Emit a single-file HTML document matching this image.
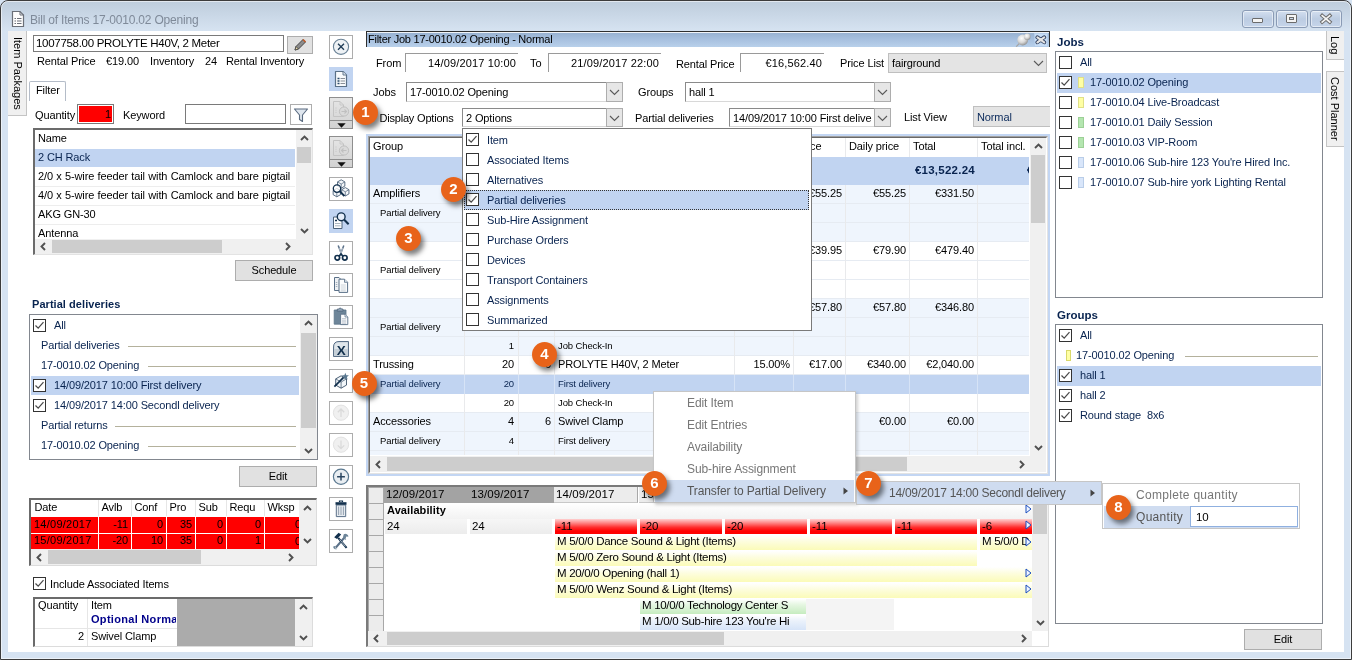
<!DOCTYPE html>
<html><head><meta charset="utf-8"><title>Bill of Items 17-0010.02 Opening</title>
<style>
*{box-sizing:border-box}
html,body{margin:0;padding:0}
body{width:1352px;height:660px;overflow:hidden;position:relative;background:#d6e3f2;font:11px "Liberation Sans",sans-serif;color:#000;letter-spacing:-0.12px}
.a{position:absolute}
.t{position:absolute;white-space:nowrap;line-height:14px}
.vt{writing-mode:vertical-rl;text-align:center;line-height:19px;font-size:11px;letter-spacing:0;white-space:nowrap}
.nv{color:#08234f}
.b{font-weight:bold}
.circ{width:25px;height:25px;border-radius:50%;background:#e8631a;color:#fff;font:bold 15px/23px "Liberation Sans",sans-serif;text-align:center;box-shadow:3px 4px 5px rgba(0,0,0,.5);letter-spacing:0}
.sm{font-size:9.5px}
.mn{font-size:12px;color:#777;letter-spacing:-0.1px}
</style></head>
<body>
<div class="a" style="left:0;top:0;width:1352px;height:660px;will-change:transform">
<div class="a" style="left:0;top:0;width:1352px;height:660px;border:1px solid #3c3c3c;border-radius:8px 8px 0 0;background:linear-gradient(#becddc 0,#c9d7e6 14px,#d7e4f2 31px,#d6e3f2 32px)"></div>
<div class="a" style="left:1px;top:1px;width:1350px;height:658px;border:1px solid rgba(255,255,255,.55);border-radius:7px 7px 0 0"></div>
<div class="a " style="left:8px;top:31px;width:1336px;height:621px;background:#fff"></div>
<svg class="a" style="left:11px;top:10px" width="14" height="18" viewBox="0 0 14 18"><path d="M1.5,1.5 H9 L12.5,5 V16.5 H1.5 Z" fill="#fdfdfd" stroke="#6a6f78" stroke-width="1.2"/><path d="M9,1.5 V5 H12.5" fill="none" stroke="#6a6f78" stroke-width="1"/><path d="M3.5,8.5h1.5M6,8.5h4.5M3.5,11h1.5M6,11h4.5M3.5,13.5h1.5M6,13.5h4.5" stroke="#6a6f78" stroke-width="1.1"/></svg>
<div class="t" style="left:30px;top:12px;font-size:12px;line-height:16px;color:#7f8a99;letter-spacing:-0.2px">Bill of Items 17-0010.02 Opening</div>
<div class="a " style="left:1242px;top:10px;width:32px;height:18px;border:1px solid #8a9bb5;border-radius:3px;background:linear-gradient(#d3dfef,#bccce2 50%,#c6d5ea);box-shadow:inset 0 0 0 1px rgba(255,255,255,.5)"></div>
<div class="a " style="left:1276px;top:10px;width:32px;height:18px;border:1px solid #8a9bb5;border-radius:3px;background:linear-gradient(#d3dfef,#bccce2 50%,#c6d5ea);box-shadow:inset 0 0 0 1px rgba(255,255,255,.5)"></div>
<div class="a " style="left:1310px;top:10px;width:32px;height:18px;border:1px solid #8a9bb5;border-radius:3px;background:linear-gradient(#d3dfef,#bccce2 50%,#c6d5ea);box-shadow:inset 0 0 0 1px rgba(255,255,255,.5)"></div>
<div class="a " style="left:1252px;top:18px;width:11px;height:5px;border:1px solid #6b6b6b;border-radius:1px;background:#f4f4f4"></div>
<div class="a " style="left:1286px;top:14px;width:11px;height:9px;border:1px solid #6b6b6b;border-radius:1px;background:#f4f4f4"></div>
<div class="a " style="left:1289px;top:17px;width:5px;height:3px;border:1px solid #6b6b6b;background:#cbd8ea"></div>
<svg class="a" style="left:1319px;top:13px" width="14" height="12" viewBox="0 0 14 12"><path d="M3.2,2.6 L10.8,9 M10.8,2.6 L3.2,9" stroke="#6b6b6b" stroke-width="3.6" stroke-linecap="square"/><path d="M3.2,2.6 L10.8,9 M10.8,2.6 L3.2,9" stroke="#f4f4f4" stroke-width="1.7" stroke-linecap="square"/></svg>
<div class="a " style="left:8px;top:31px;width:19px;height:85px;background:#f0f0f0;border:1px solid #c4c4c4;border-left:none;border-top:none"></div>
<div class="a vt" style="left:8px;top:31px;width:19px;height:85px">Item Packages</div>
<div class="a " style="left:1326px;top:31px;width:18px;height:29px;background:#f0f0f0;border:1px solid #c4c4c4;border-right:none;border-top:none"></div>
<div class="a vt" style="left:1326px;top:31px;width:18px;height:29px">Log</div>
<div class="a " style="left:1326px;top:71px;width:18px;height:76px;background:#f0f0f0;border:1px solid #c4c4c4;border-right:none"></div>
<div class="a vt" style="left:1326px;top:71px;width:18px;height:76px">Cost Planner</div>
<div class="a " style="left:33px;top:35px;width:251px;height:17px;background:#fff;border:1px solid #7a7a7a"></div>
<div class="t " style="left:36px;top:36.0px;font-size:11.5px;letter-spacing:-0.3px">1007758.00 PROLYTE H40V, 2 Meter</div>
<div class="a " style="left:287px;top:36px;width:26px;height:18px;background:#e1e1e1;border:1px solid #adadad"></div>
<svg class="a" style="left:292px;top:37px" width="16" height="16" viewBox="0 0 16 16"><path d="M3,13 L4,9.5 L11,2.5 L13.5,5 L6.5,12 Z" fill="#8c8c8c" stroke="#444" stroke-width="1"/><path d="M3,13 L4,9.5 L6.5,12 Z" fill="#e8d9a8" stroke="#444" stroke-width=".8"/><path d="M11,2.5 L13.5,5" stroke="#c45c2a" stroke-width="1.6"/></svg>
<div class="t " style="left:37px;top:53.5px;">Rental Price</div>
<div class="t " style="left:106px;top:53.5px;">€19.00</div>
<div class="t " style="left:150px;top:53.5px;">Inventory</div>
<div class="t " style="left:205px;top:53.5px;">24</div>
<div class="t " style="left:226px;top:53.5px;">Rental Inventory</div>
<div class="a " style="left:29px;top:81px;width:37px;height:20px;background:#fff;border:1px solid #b4bcc8;border-bottom:none;border-radius:2px 2px 0 0"></div>
<div class="t " style="left:36px;top:82.5px;">Filter</div>
<div class="t " style="left:35px;top:107.5px;">Quantity</div>
<div class="a " style="left:77px;top:104px;width:37px;height:20px;background:#fff;border:1px solid #7a7a7a"></div>
<div class="a " style="left:79px;top:106px;width:33px;height:16px;background:#ff0000"></div>
<div class="t " style="right:1241px;top:106.5px;">1</div>
<div class="t " style="left:123px;top:107.5px;">Keyword</div>
<div class="a " style="left:185px;top:104px;width:101px;height:20px;background:#fff;border:1px solid #7a7a7a"></div>
<div class="a " style="left:290px;top:104px;width:22px;height:21px;background:#fff;border:1px solid #adadad"></div>
<svg class="a" style="left:293px;top:107px" width="16" height="16" viewBox="0 0 16 16"><path d="M1.5,2 H14.5 L9.5,8 V14.5 L6.5,12.5 V8 Z" fill="#dfe6ee" stroke="#5a6b80" stroke-width="1.1" stroke-linejoin="round"/></svg>
<div class="a " style="left:33px;top:128px;width:280px;height:127px;background:#fff;border:1px solid #e3e3e3;border-top:2px solid #6b6b6b;border-left:2px solid #6b6b6b"></div>
<div class="t " style="left:38px;top:131.0px;">Name</div>
<div class="a " style="left:35px;top:149px;width:260px;height:18px;background:#c1d4f1"></div>
<div class="t nv" style="left:38px;top:150.0px;">2 CH Rack</div>
<div class="a " style="left:35px;top:186px;width:260px;height:1px;background:#ededed"></div>
<div class="t " style="left:38px;top:169.0px;word-spacing:0.4px">2/0 x 5-wire feeder tail with Camlock and bare pigtail</div>
<div class="a " style="left:35px;top:205px;width:260px;height:1px;background:#ededed"></div>
<div class="t " style="left:38px;top:188.0px;word-spacing:0.4px">4/0 x 5-wire feeder tail with Camlock and bare pigtail</div>
<div class="a " style="left:35px;top:224px;width:260px;height:1px;background:#ededed"></div>
<div class="t " style="left:38px;top:207.0px;">AKG GN-30</div>
<div class="t " style="left:38px;top:226.0px;">Antenna</div>
<div class="a " style="left:296px;top:130px;width:16px;height:109px;background:#f0f0f0"></div>
<div class="a " style="left:297px;top:147px;width:14px;height:16px;background:#cdcdcd"></div>
<svg class="a" style="left:299.5px;top:134.0px" width="9" height="9" viewBox="0 0 9 9"><polyline points="1,6 4.5,2.5 8,6" fill="none" stroke="#505050" stroke-width="1.9"/></svg>
<svg class="a" style="left:299.5px;top:226.0px" width="9" height="9" viewBox="0 0 9 9"><polyline points="1,3 4.5,6.5 8,3" fill="none" stroke="#505050" stroke-width="1.9"/></svg>
<div class="a " style="left:35px;top:239px;width:261px;height:15px;background:#f0f0f0"></div>
<div class="a " style="left:52px;top:240px;width:170px;height:13px;background:#cdcdcd"></div>
<svg class="a" style="left:39.0px;top:242.0px" width="9" height="9" viewBox="0 0 9 9"><polyline points="6,1 2.5,4.5 6,8" fill="none" stroke="#505050" stroke-width="1.9"/></svg>
<svg class="a" style="left:283.0px;top:242.0px" width="9" height="9" viewBox="0 0 9 9"><polyline points="3,1 6.5,4.5 3,8" fill="none" stroke="#505050" stroke-width="1.9"/></svg>
<div class="a " style="left:296px;top:239px;width:16px;height:15px;background:#f0f0f0"></div>
<div class="a " style="left:235px;top:260px;width:78px;height:21px;background:#e1e1e1;border:1px solid #adadad;text-align:center;line-height:19px">Schedule</div>
<div class="t nv" style="left:32px;top:296.5px;font-weight:bold;font-size:11px;letter-spacing:0.05px">Partial deliveries</div>
<div class="a " style="left:29px;top:314px;width:289px;height:146px;background:#fff;border:1px solid #82878f"></div>
<div class="a " style="left:33px;top:319.0px;width:13px;height:13px;border:1px solid #333;background:#fff"><svg width="11" height="11" viewBox="0 0 11 11" style="display:block"><polyline points="1.5,5.5 4.2,8.2 9.5,2.2" fill="none" stroke="#4a4a4a" stroke-width="1.25"/></svg></div>
<div class="t nv" style="left:54px;top:318.0px;">All</div>
<div class="t nv" style="left:41px;top:338.0px;">Partial deliveries</div>
<div class="a " style="left:128px;top:345.5px;width:168px;height:1px;background:#b4b19c"></div>
<div class="t nv" style="left:41px;top:358.0px;">17-0010.02 Opening</div>
<div class="a " style="left:148px;top:365.5px;width:148px;height:1px;background:#b4b19c"></div>
<div class="a " style="left:31px;top:376.0px;width:268px;height:19px;background:#c1d4f1"></div>
<div class="a " style="left:33px;top:379.0px;width:13px;height:13px;border:1px solid #333;background:#fff"><svg width="11" height="11" viewBox="0 0 11 11" style="display:block"><polyline points="1.5,5.5 4.2,8.2 9.5,2.2" fill="none" stroke="#4a4a4a" stroke-width="1.25"/></svg></div>
<div class="t nv" style="left:54px;top:378.0px;">14/09/2017 10:00 First delivery</div>
<div class="a " style="left:33px;top:399.0px;width:13px;height:13px;border:1px solid #333;background:#fff"><svg width="11" height="11" viewBox="0 0 11 11" style="display:block"><polyline points="1.5,5.5 4.2,8.2 9.5,2.2" fill="none" stroke="#4a4a4a" stroke-width="1.25"/></svg></div>
<div class="t nv" style="left:54px;top:398.0px;">14/09/2017 14:00 Secondl delivery</div>
<div class="t nv" style="left:41px;top:418.0px;">Partial returns</div>
<div class="a " style="left:115px;top:425.5px;width:181px;height:1px;background:#b4b19c"></div>
<div class="t nv" style="left:41px;top:438.0px;">17-0010.02 Opening</div>
<div class="a " style="left:148px;top:445.5px;width:148px;height:1px;background:#b4b19c"></div>
<div class="a " style="left:300px;top:315px;width:17px;height:144px;background:#f0f0f0"></div>
<div class="a " style="left:301px;top:333px;width:15px;height:95px;background:#cdcdcd"></div>
<svg class="a" style="left:304.0px;top:319.0px" width="9" height="9" viewBox="0 0 9 9"><polyline points="1,6 4.5,2.5 8,6" fill="none" stroke="#505050" stroke-width="1.9"/></svg>
<svg class="a" style="left:304.0px;top:446.0px" width="9" height="9" viewBox="0 0 9 9"><polyline points="1,3 4.5,6.5 8,3" fill="none" stroke="#505050" stroke-width="1.9"/></svg>
<div class="a " style="left:239px;top:466px;width:78px;height:21px;background:#e1e1e1;border:1px solid #adadad;text-align:center;line-height:19px">Edit</div>
<div class="a " style="left:29px;top:498px;width:288px;height:68px;background:#fff;border:1px solid #dcdcdc;border-top:2px solid #6b6b6b;border-left:2px solid #6b6b6b"></div>
<div class="t " style="left:34.5px;top:499.5px;">Date</div>
<div class="t " style="left:101.5px;top:499.5px;">Avlb</div>
<div class="a " style="left:98px;top:500px;width:1px;height:16px;background:#e6e6e6"></div>
<div class="t " style="left:134.5px;top:499.5px;">Conf</div>
<div class="a " style="left:131px;top:500px;width:1px;height:16px;background:#e6e6e6"></div>
<div class="t " style="left:169.5px;top:499.5px;">Pro</div>
<div class="a " style="left:166px;top:500px;width:1px;height:16px;background:#e6e6e6"></div>
<div class="t " style="left:198.5px;top:499.5px;">Sub</div>
<div class="a " style="left:195px;top:500px;width:1px;height:16px;background:#e6e6e6"></div>
<div class="t " style="left:229.5px;top:499.5px;">Requ</div>
<div class="a " style="left:226px;top:500px;width:1px;height:16px;background:#e6e6e6"></div>
<div class="t " style="left:267.5px;top:499.5px;">Wksp</div>
<div class="a " style="left:264px;top:500px;width:1px;height:16px;background:#e6e6e6"></div>
<div class="a " style="left:31px;top:517.0px;width:67px;height:15.5px;background:#ff0000;overflow:hidden"></div>
<div class="t " style="left:34px;top:516.5px;letter-spacing:0.25px">14/09/2017</div>
<div class="a " style="left:99px;top:517.0px;width:32px;height:15.5px;background:#ff0000;overflow:hidden"></div>
<div class="t " style="right:1224px;top:516.5px;">-11</div>
<div class="a " style="left:132px;top:517.0px;width:34px;height:15.5px;background:#ff0000;overflow:hidden"></div>
<div class="t " style="right:1189px;top:516.5px;">0</div>
<div class="a " style="left:167px;top:517.0px;width:28px;height:15.5px;background:#ff0000;overflow:hidden"></div>
<div class="t " style="right:1160px;top:516.5px;">35</div>
<div class="a " style="left:196px;top:517.0px;width:30px;height:15.5px;background:#ff0000;overflow:hidden"></div>
<div class="t " style="right:1129px;top:516.5px;">0</div>
<div class="a " style="left:227px;top:517.0px;width:37px;height:15.5px;background:#ff0000;overflow:hidden"></div>
<div class="t " style="right:1091px;top:516.5px;">0</div>
<div class="a " style="left:265px;top:517.0px;width:34px;height:15.5px;background:#ff0000;overflow:hidden"></div>
<div class="a" style="left:264px;top:517.0px;width:35px;height:15px;overflow:hidden"><div class="t" style="left:31px;top:0px">0</div></div>
<div class="a " style="left:31px;top:533.5px;width:67px;height:15.5px;background:#ff0000;overflow:hidden"></div>
<div class="t " style="left:34px;top:533.0px;letter-spacing:0.25px">15/09/2017</div>
<div class="a " style="left:99px;top:533.5px;width:32px;height:15.5px;background:#ff0000;overflow:hidden"></div>
<div class="t " style="right:1224px;top:533.0px;">-20</div>
<div class="a " style="left:132px;top:533.5px;width:34px;height:15.5px;background:#ff0000;overflow:hidden"></div>
<div class="t " style="right:1189px;top:533.0px;">10</div>
<div class="a " style="left:167px;top:533.5px;width:28px;height:15.5px;background:#ff0000;overflow:hidden"></div>
<div class="t " style="right:1160px;top:533.0px;">35</div>
<div class="a " style="left:196px;top:533.5px;width:30px;height:15.5px;background:#ff0000;overflow:hidden"></div>
<div class="t " style="right:1129px;top:533.0px;">0</div>
<div class="a " style="left:227px;top:533.5px;width:37px;height:15.5px;background:#ff0000;overflow:hidden"></div>
<div class="t " style="right:1091px;top:533.0px;">1</div>
<div class="a " style="left:265px;top:533.5px;width:34px;height:15.5px;background:#ff0000;overflow:hidden"></div>
<div class="a" style="left:264px;top:533.5px;width:35px;height:15px;overflow:hidden"><div class="t" style="left:31px;top:0px">0</div></div>
<div class="a " style="left:299px;top:500px;width:17px;height:49px;background:#f0f0f0"></div>
<svg class="a" style="left:303.0px;top:504.0px" width="9" height="9" viewBox="0 0 9 9"><polyline points="1,6 4.5,2.5 8,6" fill="none" stroke="#505050" stroke-width="1.9"/></svg>
<svg class="a" style="left:303.0px;top:536.0px" width="9" height="9" viewBox="0 0 9 9"><polyline points="1,3 4.5,6.5 8,3" fill="none" stroke="#505050" stroke-width="1.9"/></svg>
<div class="a " style="left:31px;top:549px;width:268px;height:16px;background:#f0f0f0"></div>
<div class="a " style="left:48px;top:550px;width:153px;height:14px;background:#cdcdcd"></div>
<svg class="a" style="left:35.0px;top:552.5px" width="9" height="9" viewBox="0 0 9 9"><polyline points="6,1 2.5,4.5 6,8" fill="none" stroke="#505050" stroke-width="1.9"/></svg>
<svg class="a" style="left:286.0px;top:552.5px" width="9" height="9" viewBox="0 0 9 9"><polyline points="3,1 6.5,4.5 3,8" fill="none" stroke="#505050" stroke-width="1.9"/></svg>
<div class="a " style="left:299px;top:549px;width:17px;height:16px;background:#f0f0f0"></div>
<div class="a " style="left:33px;top:577px;width:13px;height:13px;border:1px solid #333;background:#fff"><svg width="11" height="11" viewBox="0 0 11 11" style="display:block"><polyline points="1.5,5.5 4.2,8.2 9.5,2.2" fill="none" stroke="#4a4a4a" stroke-width="1.25"/></svg></div>
<div class="t " style="left:50px;top:576.5px;">Include Associated Items</div>
<div class="a " style="left:33px;top:597px;width:280px;height:50px;background:#fff;border:1px solid #dcdcdc;border-top:2px solid #6b6b6b;border-left:2px solid #6b6b6b"></div>
<div class="a " style="left:177px;top:598.5px;width:118px;height:47.5px;background:#ababab"></div>
<div class="a " style="left:87px;top:599px;width:1px;height:47px;background:#e6e6e6"></div>
<div class="a " style="left:35px;top:628px;width:142px;height:1px;background:#e6e6e6"></div>
<div class="t " style="left:38px;top:598.0px;">Quantity</div>
<div class="t " style="left:91px;top:598.0px;">Item</div>
<div class="a " style="left:91px;top:615px;width:85px;height:12px;overflow:hidden"><div class="t" style="left:0;top:-2.7px;font-weight:bold;color:#00008b;letter-spacing:0.3px">Optional Norma</div></div>
<div class="t " style="right:1268px;top:628.5px;">2</div>
<div class="t " style="left:91px;top:628.5px;">Swivel Clamp</div>
<div class="a " style="left:295px;top:599px;width:17px;height:47px;background:#f0f0f0"></div>
<svg class="a" style="left:299.0px;top:603.0px" width="9" height="9" viewBox="0 0 9 9"><polyline points="1,6 4.5,2.5 8,6" fill="none" stroke="#505050" stroke-width="1.9"/></svg>
<svg class="a" style="left:299.0px;top:633.0px" width="9" height="9" viewBox="0 0 9 9"><polyline points="1,3 4.5,6.5 8,3" fill="none" stroke="#505050" stroke-width="1.9"/></svg>
<div class="a " style="left:329px;top:35px;width:24px;height:24px;background:#fff;border:1px solid #adadad"></div>
<svg class="a" style="left:332px;top:38px" width="18" height="18" viewBox="0 0 18 18"><circle cx="9" cy="8.8" r="7.6" fill="#eef2f5" stroke="#6a8296" stroke-width="1.1"/><path d="M6,5.8 L12,11.8 M12,5.8 L6,11.8" stroke="#1d3a55" stroke-width="1.3"/></svg>
<div class="a " style="left:329px;top:67px;width:24px;height:24px;background:#c1d4f1"></div>
<svg class="a" style="left:334px;top:70px" width="14" height="18" viewBox="0 0 14 18"><path d="M1.5,1.5 H9 L12.5,5 V16.5 H1.5 Z" fill="#f8fafc" stroke="#5a7088" stroke-width="1.2" stroke-linejoin="round"/><path d="M9,1.5 V5 H12.5" fill="#dde5ee" stroke="#5a7088" stroke-width=".9"/><path d="M3.5,8.5h2M3.5,11h2M3.5,13.5h2" stroke="#2a4a6a" stroke-width="1.3"/><path d="M6.5,8.5h4.5M6.5,11h4.5M6.5,13.5h4.5" stroke="#8a8f98" stroke-width="1.1"/></svg>
<div class="a " style="left:329px;top:97px;width:24px;height:32px;background:linear-gradient(#e6e6e6,#d2d2d2);border:1px solid #8e8e8e"></div>
<div class="a " style="left:330px;top:120px;width:22px;height:1px;background:#8e8e8e"></div>
<svg class="a" style="left:336.5px;top:123px" width="9" height="5" viewBox="0 0 9 5"><path d="M0.3,0.3 H8.7 L4.5,4.7 Z" fill="#111"/></svg>
<svg class="a" style="left:333px;top:101px" width="17" height="17" viewBox="0 0 17 17"><path d="M0.5,0.5 H7 L10.5,4 V15.5 H0.5 Z" fill="none" stroke="#c4c4c4" stroke-width="1"/><path d="M7,0.5 V4 H10.5" fill="none" stroke="#c4c4c4" stroke-width=".8"/><path d="M2.5,7h1M2.5,9.2h1M2.5,11.4h1" stroke="#c4c4c4" stroke-width="1"/><circle cx="11" cy="10.5" r="4.6" fill="#dadada" stroke="#c0c0c0" stroke-width="1"/><path d="M8.5,10.5h5M11.5,8.5l2,2-2,2" fill="none" stroke="#c0c0c0" stroke-width="1.1"/></svg>
<div class="a " style="left:329px;top:136px;width:24px;height:32px;background:linear-gradient(#e6e6e6,#d2d2d2);border:1px solid #8e8e8e"></div>
<div class="a " style="left:330px;top:159px;width:22px;height:1px;background:#8e8e8e"></div>
<svg class="a" style="left:336.5px;top:162px" width="9" height="5" viewBox="0 0 9 5"><path d="M0.3,0.3 H8.7 L4.5,4.7 Z" fill="#111"/></svg>
<svg class="a" style="left:333px;top:140px" width="17" height="17" viewBox="0 0 17 17"><path d="M0.5,0.5 H7 L10.5,4 V15.5 H0.5 Z" fill="none" stroke="#c4c4c4" stroke-width="1"/><path d="M7,0.5 V4 H10.5" fill="none" stroke="#c4c4c4" stroke-width=".8"/><path d="M2.5,7h1M2.5,9.2h1M2.5,11.4h1" stroke="#c4c4c4" stroke-width="1"/><circle cx="11" cy="10.5" r="4.6" fill="#dadada" stroke="#c0c0c0" stroke-width="1"/><path d="M13.5,10.5h-5M10.5,8.5l-2,2 2,2" fill="none" stroke="#c0c0c0" stroke-width="1.1"/></svg>
<div class="a " style="left:329px;top:177px;width:24px;height:24px;background:#fff;border:1px solid #adadad"></div>
<svg class="a" style="left:329px;top:177px" width="24" height="24" viewBox="0 0 24 24"><path d="M12.2,2.8 L15.854,4.9 V9.1 L12.2,11.2 L8.546,9.1 V4.9 Z" fill="#f4f7fa" stroke="#4a6078" stroke-width=".9" stroke-linejoin="round"/><path d="M8.546,4.9 L12.2,7 L15.854,4.9 M12.2,7 V11.2" fill="none" stroke="#4a6078" stroke-width=".7"/><path d="M16.3,10.600000000000001 L19.954,12.700000000000001 V16.900000000000002 L16.3,19.0 L12.646,16.900000000000002 V12.700000000000001 Z" fill="#f4f7fa" stroke="#4a6078" stroke-width=".9" stroke-linejoin="round"/><path d="M12.646,12.700000000000001 L16.3,14.8 L19.954,12.700000000000001 M16.3,14.8 V19.0" fill="none" stroke="#4a6078" stroke-width=".7"/><path d="M7.8,11.399999999999999 L11.454,13.5 V17.7 L7.8,19.8 L4.146,17.7 V13.5 Z" fill="#f4f7fa" stroke="#4a6078" stroke-width=".9" stroke-linejoin="round"/><path d="M4.146,13.5 L7.8,15.6 L11.454,13.5 M7.8,15.6 V19.8" fill="none" stroke="#4a6078" stroke-width=".7"/><circle cx="8" cy="11.6" r="3.7" fill="rgba(255,255,255,.75)" stroke="#12304d" stroke-width="1.3"/><path d="M10.8,14.4 L15.4,19" stroke="#12304d" stroke-width="2"/></svg>
<div class="a " style="left:329px;top:209px;width:24px;height:24px;background:#c1d4f1"></div>
<svg class="a" style="left:329px;top:209px" width="24" height="24" viewBox="0 0 24 24"><path d="M4.5,8 H13 V19.5 H4.5 Z" fill="#fcfdfe" stroke="#4a6078" stroke-width="1"/><path d="M6,14.5h5.5M6,16.8h5.5" stroke="#aab4be" stroke-width="1"/><path d="M6,11.5h2" stroke="#12304d" stroke-width="1.6"/><circle cx="12.2" cy="7.8" r="3.9" fill="#e6eefa" stroke="#12304d" stroke-width="1.4"/><path d="M15,10.6 L19.6,15.2" stroke="#12304d" stroke-width="2.1"/></svg>
<div class="a " style="left:329px;top:241px;width:24px;height:24px;background:#fff;border:1px solid #adadad"></div>
<svg class="a" style="left:329px;top:241px" width="24" height="24" viewBox="0 0 24 24"><path d="M9.2,4.5 L13,14.5 M14.8,4.5 L11,14.5" stroke="#5a7088" stroke-width="1.5"/><path d="M10.2,7 L12,12 L13.8,7" fill="none" stroke="#c2ccd6" stroke-width=".8"/><circle cx="8.3" cy="16.8" r="2.3" fill="none" stroke="#12304d" stroke-width="1.7"/><circle cx="15.8" cy="16.8" r="2.3" fill="none" stroke="#12304d" stroke-width="1.7"/><path d="M10,15.2 L12,13 L14,15.2" fill="none" stroke="#12304d" stroke-width="1.5"/></svg>
<div class="a " style="left:329px;top:273px;width:24px;height:24px;background:#fff;border:1px solid #adadad"></div>
<svg class="a" style="left:329px;top:273px" width="24" height="24" viewBox="0 0 24 24"><path d="M5.5,4.5 H10 L11.5,6 V17.5 H5.5 Z" fill="#eef1f4" stroke="#5a7088" stroke-width="1"/><path d="M6.8,9.5h1.5M6.8,11.5h1.5M6.8,13.5h1.5" stroke="#9aa6b2" stroke-width=".9"/><path d="M10,6.2 H15.5 L18.6,9.3 V19.4 H10 Z" fill="#fbfcfd" stroke="#5a7088" stroke-width="1" stroke-linejoin="round"/><path d="M15.5,6.2 V9.3 H18.6" fill="#dfe6ee" stroke="#5a7088" stroke-width=".8"/><path d="M11.8,12h5M11.8,14h5M11.8,16h5M11.8,17.8h5" stroke="#c4cbd3" stroke-width=".8"/></svg>
<div class="a " style="left:329px;top:305px;width:24px;height:24px;background:#fff;border:1px solid #adadad"></div>
<svg class="a" style="left:329px;top:305px" width="24" height="24" viewBox="0 0 24 24"><path d="M5.2,5 H17 V19.2 H5.2 Z" fill="#6d8599" stroke="#5a7388" stroke-width=".8"/><path d="M8.3,4 H10 L10.6,3 H11.8 L12.4,4 H14 V6.2 H8.3 Z" fill="#8fa3b4" stroke="#4a6078" stroke-width=".7"/><path d="M11.6,9.2 H16 L18.8,12 V19.6 H11.6 Z" fill="#fbfcfd" stroke="#5a7088" stroke-width=".9" stroke-linejoin="round"/><path d="M16,9.2 V12 H18.8" fill="#e4eaf0" stroke="#5a7088" stroke-width=".7"/><path d="M13,13.6h4.2M13,15.2h4.2M13,16.8h4.2M13,18.2h4.2" stroke="#b4bcc6" stroke-width=".8"/></svg>
<div class="a " style="left:329px;top:337px;width:24px;height:24px;background:#fff;border:1px solid #adadad"></div>
<svg class="a" style="left:329px;top:337px" width="24" height="24" viewBox="0 0 24 24"><path d="M4.5,19.5 V10 Q4.5,4.5 10,4.5 H19.5 V19.5 Z" fill="#c6d0d8" stroke="#5a7088" stroke-width="1"/><path d="M5.5,18.5 V10 Q5.5,5.5 10,5.5 H18.5 V12 H5.5" fill="#dfe6eb" stroke="none"/><text x="12.1" y="17.6" text-anchor="middle" font-family="Liberation Sans,sans-serif" font-weight="bold" font-size="13.5" fill="#12304d">X</text></svg>
<div class="a " style="left:329px;top:369px;width:24px;height:24px;background:#fff;border:1px solid #adadad"></div>
<svg class="a" style="left:329px;top:369px" width="24" height="24" viewBox="0 0 24 24"><path d="M12.1,6.8 L17.494,9.9 V16.1 L12.1,19.2 L6.7059999999999995,16.1 V9.9 Z" fill="#f2f6f9" stroke="#3a5068" stroke-width=".9" stroke-linejoin="round"/><path d="M6.7059999999999995,9.9 L12.1,13 L17.494,9.9 M12.1,13 V19.2" fill="none" stroke="#3a5068" stroke-width=".7"/><path d="M5.4,17.6 L14.6,8.4" stroke="#12304d" stroke-width="1.8"/><path d="M16.3,3.8 L17.3,6.2 L19.9,6.3 L17.9,8 L18.6,10.5 L16.3,9.1 L14.1,10.5 L14.8,8 L12.8,6.3 L15.4,6.2 Z" fill="#5a7890"/></svg>
<div class="a " style="left:329px;top:401px;width:24px;height:24px;background:#fff;border:1px solid #adadad"></div>
<svg class="a" style="left:329px;top:401px" width="24" height="24" viewBox="0 0 24 24"><circle cx="12" cy="11.7" r="7.6" fill="#f0f0f0" stroke="#e2e2e2" stroke-width="1"/><path d="M12,8.2 V16 M8.8,11.2 L12,8 L15.2,11.2" fill="none" stroke="#dadada" stroke-width="1.3"/></svg>
<div class="a " style="left:329px;top:433px;width:24px;height:24px;background:#fff;border:1px solid #adadad"></div>
<svg class="a" style="left:329px;top:433px" width="24" height="24" viewBox="0 0 24 24"><circle cx="12" cy="11.7" r="7.6" fill="#f0f0f0" stroke="#e2e2e2" stroke-width="1"/><path d="M12,7.6 V15.6 M8.8,12.4 L12,15.6 L15.2,12.4" fill="none" stroke="#dadada" stroke-width="1.3"/></svg>
<div class="a " style="left:329px;top:465px;width:24px;height:24px;background:#fff;border:1px solid #adadad"></div>
<svg class="a" style="left:329px;top:465px" width="24" height="24" viewBox="0 0 24 24"><circle cx="12" cy="11.7" r="7.6" fill="#e9eef2" stroke="#5a7890" stroke-width="1.2"/><path d="M12,7.8 V15.6 M8.1,11.7 H15.9" stroke="#2a4560" stroke-width="1.5"/></svg>
<div class="a " style="left:329px;top:497px;width:24px;height:24px;background:#fff;border:1px solid #adadad"></div>
<svg class="a" style="left:329px;top:497px" width="24" height="24" viewBox="0 0 24 24"><path d="M7.3,8 H16.7 V19.6 H7.3 Z" fill="#e6ebf0" stroke="#5a7088" stroke-width="1"/><path d="M9.6,9.5v8.5M12,9.5v8.5M14.4,9.5v8.5" stroke="#94a2b0" stroke-width="1"/><path d="M6.5,5.2 H17.5 V7.8 H6.5 Z" fill="#12304d"/><path d="M10.5,5 V4 H13.5 V5" fill="none" stroke="#12304d" stroke-width="1.2"/></svg>
<div class="a " style="left:329px;top:529px;width:24px;height:24px;background:#fff;border:1px solid #adadad"></div>
<svg class="a" style="left:329px;top:529px" width="24" height="24" viewBox="0 0 24 24"><path d="M6.8,18.6 L16.2,7.6" stroke="#5a7088" stroke-width="2.2"/><path d="M14.8,5.2 a3,3 0 0 1 4.6,2.6 l-2,-0.2 -1,1.4 0.8,1.8 a3,3 0 0 1 -3,-3.6z" fill="#6d8599"/><path d="M4.2,17.5 a2.6,2.6 0 0 0 4.2,2.2 l-1.8,-0.3 -0.6,-1.3 0.8,-1.4 z" fill="#6d8599"/><path d="M9.2,8.8 L17.6,18.8" stroke="#12304d" stroke-width="2"/><path d="M5.2,8.2 L9.6,3.8 L12.2,5.6 L8,10 Z" fill="#12304d"/><path d="M10.6,10.4 L16.4,17.4" stroke="#dfe6ec" stroke-width=".7"/></svg>
<div class="a " style="left:366px;top:31px;width:684px;height:16px;background:linear-gradient(#96b0d0,#a7c0df 50%,#b8d0ea);border-top:1px solid #2e2e2e;border-left:1px solid #2e2e2e;border-right:1px solid #2e2e2e"></div>
<div class="t " style="left:368px;top:31.799999999999997px;letter-spacing:-0.25px">Filter Job 17-0010.02 Opening - Normal</div>
<div class="a " style="left:367px;top:32px;width:682px;height:1px;background:rgba(255,255,255,.85)"></div>
<svg class="a" style="left:1014px;top:32px" width="20" height="16" viewBox="0 0 20 16"><defs><radialGradient id="pg" cx="40%" cy="35%" r="70%"><stop offset="0" stop-color="#ffffff"/><stop offset=".55" stop-color="#d8d8d8"/><stop offset="1" stop-color="#8a8a8a"/></radialGradient></defs><path d="M5.2,11.6 L2.2,14.6" stroke="#a4a4a4" stroke-width="1.3"/><circle cx="8.7" cy="8" r="5.4" fill="url(#pg)"/><circle cx="13.3" cy="4.8" r="3.2" fill="url(#pg)"/></svg>
<div class="a " style="left:1034px;top:33px;width:14px;height:14px;background:#c6dcf5;border:1px solid #b4cdea"></div>
<svg class="a" style="left:1035px;top:35px" width="12" height="10" viewBox="0 0 12 10"><path d="M2.4,2.3 L9.2,7.3 M9.2,2.3 L2.4,7.3" stroke="#2c3c5c" stroke-width="3.9" stroke-linecap="round"/><path d="M2.4,2.3 L9.2,7.3 M9.2,2.3 L2.4,7.3" stroke="#e4e4e4" stroke-width="2.2" stroke-linecap="round"/></svg>
<div class="t " style="left:376px;top:56.0px;">From</div>
<div class="a " style="left:405px;top:53px;width:113px;height:19px;background:#fff;border-top:1px solid #9a9a9a;border-left:1px solid #9a9a9a"></div>
<div class="t " style="right:836px;top:55.5px;letter-spacing:0.15px">14/09/2017 10:00</div>
<div class="t " style="left:530px;top:56.0px;">To</div>
<div class="a " style="left:548px;top:53px;width:113px;height:19px;background:#fff;border-top:1px solid #9a9a9a;border-left:1px solid #9a9a9a"></div>
<div class="t " style="right:693px;top:55.5px;letter-spacing:0.15px">21/09/2017 22:00</div>
<div class="t " style="left:676px;top:56.5px;">Rental Price</div>
<div class="a " style="left:740px;top:53px;width:84px;height:19px;background:#fff;border-top:1px solid #9a9a9a;border-left:1px solid #9a9a9a"></div>
<div class="t " style="right:530px;top:55.5px;letter-spacing:0.15px">€16,562.40</div>
<div class="t " style="left:840px;top:56.0px;">Price List</div>
<div class="a " style="left:888px;top:53px;width:159px;height:20px;background:#e4e4e4;border:1px solid #bfbfbf"></div>
<div class="t " style="left:892px;top:56.0px;">fairground</div>
<svg class="a" style="left:1033px;top:60.0px" width="11" height="7" viewBox="0 0 11 7"><polyline points="1,1 5.5,5.5 10,1" fill="none" stroke="#5a5a5a" stroke-width="1.1"/></svg>
<div class="t " style="left:373px;top:84.5px;">Jobs</div>
<div class="a " style="left:406px;top:82px;width:217px;height:20px;background:#fff;border:1px solid #d8d8d8;border-top-color:#8a8a8a;border-left-color:#8a8a8a"></div>
<div class="a " style="left:606px;top:82px;width:17px;height:20px;background:#e6e6e6;border:1px solid #adadad"></div>
<div class="t " style="left:410px;top:85.0px;">17-0010.02 Opening</div>
<svg class="a" style="left:609px;top:89.0px" width="11" height="7" viewBox="0 0 11 7"><polyline points="1,1 5.5,5.5 10,1" fill="none" stroke="#5a5a5a" stroke-width="1.1"/></svg>
<div class="t " style="left:638px;top:84.5px;">Groups</div>
<div class="a " style="left:685px;top:82px;width:206px;height:20px;background:#fff;border:1px solid #d8d8d8;border-top-color:#8a8a8a;border-left-color:#8a8a8a"></div>
<div class="a " style="left:874px;top:82px;width:17px;height:20px;background:#e6e6e6;border:1px solid #adadad"></div>
<div class="t " style="left:689px;top:85.0px;">hall 1</div>
<svg class="a" style="left:877px;top:89.0px" width="11" height="7" viewBox="0 0 11 7"><polyline points="1,1 5.5,5.5 10,1" fill="none" stroke="#5a5a5a" stroke-width="1.1"/></svg>
<div class="t " style="left:379.5px;top:110.5px;letter-spacing:-0.2px">Display Options</div>
<div class="a " style="left:462px;top:108px;width:161px;height:19px;background:#fff;border:1px solid #d8d8d8;border-top-color:#8a8a8a;border-left-color:#8a8a8a"></div>
<div class="a " style="left:606px;top:108px;width:17px;height:19px;background:#e6e6e6;border:1px solid #adadad"></div>
<div class="t " style="left:466px;top:110.5px;">2 Options</div>
<svg class="a" style="left:609px;top:114.5px" width="11" height="7" viewBox="0 0 11 7"><polyline points="1,1 5.5,5.5 10,1" fill="none" stroke="#5a5a5a" stroke-width="1.1"/></svg>
<div class="t " style="left:635px;top:110.5px;">Partial deliveries</div>
<div class="a " style="left:729px;top:108px;width:162px;height:19px;background:#fff;border:1px solid #d8d8d8;border-top-color:#8a8a8a;border-left-color:#8a8a8a"></div>
<div class="a " style="left:874px;top:108px;width:17px;height:19px;background:#e6e6e6;border:1px solid #adadad"></div>
<div class="t " style="left:733px;top:110.5px;">14/09/2017 10:00 First delive</div>
<svg class="a" style="left:877px;top:114.5px" width="11" height="7" viewBox="0 0 11 7"><polyline points="1,1 5.5,5.5 10,1" fill="none" stroke="#5a5a5a" stroke-width="1.1"/></svg>
<div class="t " style="left:904px;top:109.5px;">List View</div>
<div class="a " style="left:973px;top:106px;width:77px;height:21px;background:#e4e4e4;border:1px solid #bfbfbf;border-right:none"></div>
<div class="t " style="left:977px;top:109.5px;color:#0b2a5b">Normal</div>
<div class="a " style="left:366px;top:134px;width:684px;height:342px;background:#c3d6f3"></div>
<div class="a " style="left:368px;top:136px;width:680px;height:338px;background:#fff;border-top:1px solid #a0a0a0;border-left:1px solid #a0a0a0;border-right:1px solid #e3e3e3;border-bottom:1px solid #e3e3e3"></div>
<div class="a " style="left:369px;top:137px;width:678px;height:336px;border-top:1px solid #696969;border-left:1px solid #696969;border-right:1px solid #fff;border-bottom:1px solid #fff"></div>
<div class="a " style="left:370px;top:185px;width:659px;height:19px;background:#eff5fd"></div>
<div class="a " style="left:370px;top:203px;width:659px;height:1px;background:#e6ebf2"></div>
<div class="a " style="left:370px;top:204px;width:659px;height:19px;background:#eff5fd"></div>
<div class="a " style="left:370px;top:222px;width:659px;height:1px;background:#e6ebf2"></div>
<div class="a " style="left:370px;top:223px;width:659px;height:19px;background:#eff5fd"></div>
<div class="a " style="left:370px;top:241px;width:659px;height:1px;background:#e6ebf2"></div>
<div class="a " style="left:370px;top:242px;width:659px;height:19px;background:#fff"></div>
<div class="a " style="left:370px;top:260px;width:659px;height:1px;background:#e6ebf2"></div>
<div class="a " style="left:370px;top:261px;width:659px;height:19px;background:#fff"></div>
<div class="a " style="left:370px;top:279px;width:659px;height:1px;background:#e6ebf2"></div>
<div class="a " style="left:370px;top:280px;width:659px;height:19px;background:#fff"></div>
<div class="a " style="left:370px;top:298px;width:659px;height:1px;background:#e6ebf2"></div>
<div class="a " style="left:370px;top:299px;width:659px;height:19px;background:#eff5fd"></div>
<div class="a " style="left:370px;top:317px;width:659px;height:1px;background:#e6ebf2"></div>
<div class="a " style="left:370px;top:318px;width:659px;height:19px;background:#eff5fd"></div>
<div class="a " style="left:370px;top:336px;width:659px;height:1px;background:#e6ebf2"></div>
<div class="a " style="left:370px;top:337px;width:659px;height:19px;background:#eff5fd"></div>
<div class="a " style="left:370px;top:355px;width:659px;height:1px;background:#e6ebf2"></div>
<div class="a " style="left:370px;top:356px;width:659px;height:19px;background:#fff"></div>
<div class="a " style="left:370px;top:374px;width:659px;height:1px;background:#e6ebf2"></div>
<div class="a " style="left:370px;top:375px;width:659px;height:19px;background:#fff"></div>
<div class="a " style="left:370px;top:393px;width:659px;height:1px;background:#e6ebf2"></div>
<div class="a " style="left:370px;top:394px;width:659px;height:19px;background:#fff"></div>
<div class="a " style="left:370px;top:412px;width:659px;height:1px;background:#e6ebf2"></div>
<div class="a " style="left:370px;top:413px;width:659px;height:19px;background:#eff5fd"></div>
<div class="a " style="left:370px;top:431px;width:659px;height:1px;background:#e6ebf2"></div>
<div class="a " style="left:370px;top:432px;width:659px;height:19px;background:#eff5fd"></div>
<div class="a " style="left:370px;top:450px;width:659px;height:1px;background:#e6ebf2"></div>
<div class="a " style="left:370px;top:451px;width:659px;height:4px;background:#eff5fd"></div>
<div class="a " style="left:464px;top:138px;width:1px;height:317px;background:#e9eaec"></div>
<div class="a " style="left:518px;top:138px;width:1px;height:317px;background:#e9eaec"></div>
<div class="a " style="left:554px;top:138px;width:1px;height:317px;background:#e9eaec"></div>
<div class="a " style="left:734px;top:138px;width:1px;height:317px;background:#e9eaec"></div>
<div class="a " style="left:793px;top:138px;width:1px;height:317px;background:#e9eaec"></div>
<div class="a " style="left:845px;top:138px;width:1px;height:317px;background:#e9eaec"></div>
<div class="a " style="left:909px;top:138px;width:1px;height:317px;background:#e9eaec"></div>
<div class="a " style="left:977px;top:138px;width:1px;height:317px;background:#e9eaec"></div>
<div class="a " style="left:370px;top:157px;width:659px;height:28px;background:#c1d4f1"></div>
<div class="a " style="left:370px;top:375px;width:659px;height:19px;background:#c1d4f1"></div>
<div class="a " style="left:464px;top:375px;width:1px;height:19px;background:rgba(255,255,255,.35)"></div>
<div class="a " style="left:518px;top:375px;width:1px;height:19px;background:rgba(255,255,255,.35)"></div>
<div class="a " style="left:554px;top:375px;width:1px;height:19px;background:rgba(255,255,255,.35)"></div>
<div class="a " style="left:734px;top:375px;width:1px;height:19px;background:rgba(255,255,255,.35)"></div>
<div class="a " style="left:793px;top:375px;width:1px;height:19px;background:rgba(255,255,255,.35)"></div>
<div class="a " style="left:845px;top:375px;width:1px;height:19px;background:rgba(255,255,255,.35)"></div>
<div class="a " style="left:909px;top:375px;width:1px;height:19px;background:rgba(255,255,255,.35)"></div>
<div class="a " style="left:977px;top:375px;width:1px;height:19px;background:rgba(255,255,255,.35)"></div>
<div class="t " style="left:373px;top:138.5px;">Group</div>
<div class="t " style="left:849px;top:138.5px;">Daily price</div>
<div class="t " style="left:913px;top:138.5px;">Total</div>
<div class="t " style="left:981px;top:138.5px;">Total incl.</div>
<div class="t " style="left:797px;top:138.5px;clip-path:inset(0 0 0 14px)">Price</div>
<div class="t nv" style="right:377px;top:162.5px;font-weight:bold;font-size:11.5px;letter-spacing:0.25px">€13,522.24</div>
<div class="a " style="left:1020px;top:160px;width:9px;height:20px;overflow:hidden"><div class="t nv b" style="left:7px;top:3px;font-size:11.5px">€</div></div>
<div class="t " style="left:373px;top:186.1px;">Amplifiers</div>
<div class="t " style="right:510px;top:186.1px;">€55.25</div>
<div class="t " style="right:446px;top:186.1px;">€55.25</div>
<div class="t " style="right:378px;top:186.1px;">€331.50</div>
<div class="t  sm" style="left:380px;top:206.0px;">Partial delivery</div>
<div class="t " style="right:510px;top:243.1px;">€39.95</div>
<div class="t " style="right:446px;top:243.1px;">€79.90</div>
<div class="t " style="right:378px;top:243.1px;">€479.40</div>
<div class="t  sm" style="left:380px;top:263.0px;">Partial delivery</div>
<div class="t " style="right:510px;top:300.1px;">€57.80</div>
<div class="t " style="right:446px;top:300.1px;">€57.80</div>
<div class="t " style="right:378px;top:300.1px;">€346.80</div>
<div class="t  sm" style="left:380px;top:320.0px;">Partial delivery</div>
<div class="t  sm" style="right:838px;top:339.0px;">1</div>
<div class="t  sm" style="left:558px;top:339.0px;">Job Check-In</div>
<div class="t " style="left:373px;top:357.1px;">Trussing</div>
<div class="t " style="right:838px;top:357.1px;">20</div>
<div class="t " style="right:801px;top:357.1px;">6</div>
<div class="t " style="left:558px;top:357.1px;">PROLYTE H40V, 2 Meter</div>
<div class="t " style="right:562px;top:357.1px;">15.00%</div>
<div class="t " style="right:510px;top:357.1px;">€17.00</div>
<div class="t " style="right:446px;top:357.1px;">€340.00</div>
<div class="t " style="right:378px;top:357.1px;">€2,040.00</div>
<div class="t nv sm" style="left:380px;top:377.0px;">Partial delivery</div>
<div class="t nv sm" style="right:838px;top:377.0px;">20</div>
<div class="t nv sm" style="left:558px;top:377.0px;">First delivery</div>
<div class="t  sm" style="right:838px;top:396.0px;">20</div>
<div class="t  sm" style="left:558px;top:396.0px;">Job Check-In</div>
<div class="t " style="left:373px;top:414.1px;">Accessories</div>
<div class="t " style="right:838px;top:414.1px;">4</div>
<div class="t " style="right:801px;top:414.1px;">6</div>
<div class="t " style="left:558px;top:414.1px;">Swivel Clamp</div>
<div class="t " style="right:446px;top:414.1px;">€0.00</div>
<div class="t " style="right:378px;top:414.1px;">€0.00</div>
<div class="t  sm" style="left:380px;top:434.0px;">Partial delivery</div>
<div class="t  sm" style="right:838px;top:434.0px;">4</div>
<div class="t  sm" style="left:558px;top:434.0px;">First delivery</div>
<div class="a " style="left:1030px;top:138px;width:16px;height:318px;background:#f0f0f0"></div>
<div class="a " style="left:1031px;top:155px;width:14px;height:68px;background:#cdcdcd"></div>
<svg class="a" style="left:1033.5px;top:142.0px" width="9" height="9" viewBox="0 0 9 9"><polyline points="1,6 4.5,2.5 8,6" fill="none" stroke="#505050" stroke-width="1.9"/></svg>
<svg class="a" style="left:1033.5px;top:443.0px" width="9" height="9" viewBox="0 0 9 9"><polyline points="1,3 4.5,6.5 8,3" fill="none" stroke="#505050" stroke-width="1.9"/></svg>
<div class="a " style="left:370px;top:456px;width:660px;height:16px;background:#f0f0f0"></div>
<div class="a " style="left:387px;top:457px;width:520px;height:14px;background:#cdcdcd"></div>
<svg class="a" style="left:374.0px;top:459.5px" width="9" height="9" viewBox="0 0 9 9"><polyline points="6,1 2.5,4.5 6,8" fill="none" stroke="#505050" stroke-width="1.9"/></svg>
<svg class="a" style="left:1017.0px;top:459.5px" width="9" height="9" viewBox="0 0 9 9"><polyline points="3,1 6.5,4.5 3,8" fill="none" stroke="#505050" stroke-width="1.9"/></svg>
<div class="a " style="left:1030px;top:456px;width:16px;height:16px;background:#f0f0f0"></div>
<div class="a " style="left:366px;top:485px;width:683px;height:162px;background:#fff;border-top:2px solid #7a7a7a;border-left:2px solid #7a7a7a;border-right:1px solid #dcdcdc;border-bottom:1px solid #dcdcdc"></div>
<div class="a " style="left:368px;top:487px;width:16px;height:17px;background:#ececec;border:1px solid #a8a8a8"></div>
<div class="a " style="left:368px;top:503px;width:16px;height:17px;background:#ececec;border:1px solid #a8a8a8"></div>
<div class="a " style="left:368px;top:519px;width:16px;height:17px;background:#ececec;border:1px solid #a8a8a8"></div>
<div class="a " style="left:368px;top:535px;width:16px;height:17px;background:#ececec;border:1px solid #a8a8a8"></div>
<div class="a " style="left:368px;top:551px;width:16px;height:17px;background:#ececec;border:1px solid #a8a8a8"></div>
<div class="a " style="left:368px;top:567px;width:16px;height:17px;background:#ececec;border:1px solid #a8a8a8"></div>
<div class="a " style="left:368px;top:583px;width:16px;height:17px;background:#ececec;border:1px solid #a8a8a8"></div>
<div class="a " style="left:368px;top:599px;width:16px;height:17px;background:#ececec;border:1px solid #a8a8a8"></div>
<div class="a " style="left:368px;top:615px;width:16px;height:17px;background:#ececec;border:1px solid #a8a8a8"></div>
<div class="a " style="left:384px;top:487px;width:170px;height:16px;background:#a3a3a3"></div>
<div class="a " style="left:554px;top:487px;width:84px;height:16px;background:#ececec;border-right:1px solid #a8a8a8;border-bottom:1px solid #c8c8c8"></div>
<div class="a " style="left:639px;top:487px;width:393px;height:16px;background:#ececec;border-bottom:1px solid #c8c8c8"></div>
<div class="t " style="left:386px;top:487.0px;font-size:11.5px;letter-spacing:0.1px">12/09/2017</div>
<div class="t " style="left:471px;top:487.0px;font-size:11.5px;letter-spacing:0.1px">13/09/2017</div>
<div class="t " style="left:556px;top:487.0px;font-size:11.5px;letter-spacing:0.1px">14/09/2017</div>
<div class="t " style="left:641px;top:487.0px;font-size:11.5px;letter-spacing:0.1px">15</div>
<div class="a " style="left:384px;top:503px;width:648px;height:16px;background:linear-gradient(#fff,#f2f2f2)"></div>
<div class="t " style="left:387px;top:502.5px;font-weight:bold;letter-spacing:0.1px">Availability</div>
<div class="a " style="left:385px;top:519px;width:82px;height:15px;background:linear-gradient(#f6f6f6,#ececec)"></div>
<div class="t " style="left:387px;top:519.0px;font-size:11.5px">24</div>
<div class="a " style="left:470px;top:519px;width:82px;height:15px;background:linear-gradient(#f6f6f6,#ececec)"></div>
<div class="t " style="left:472px;top:519.0px;font-size:11.5px">24</div>
<div class="a " style="left:555px;top:519px;width:82px;height:15px;background:linear-gradient(#ffd0d0 0,#ff8a8a 25%,#ff3030 55%,#f00 80%)"></div>
<div class="t " style="left:557px;top:519.0px;font-size:11.5px">-11</div>
<div class="a " style="left:640px;top:519px;width:82px;height:15px;background:linear-gradient(#ffd0d0 0,#ff8a8a 25%,#ff3030 55%,#f00 80%)"></div>
<div class="t " style="left:642px;top:519.0px;font-size:11.5px">-20</div>
<div class="a " style="left:725px;top:519px;width:82px;height:15px;background:linear-gradient(#ffd0d0 0,#ff8a8a 25%,#ff3030 55%,#f00 80%)"></div>
<div class="t " style="left:727px;top:519.0px;font-size:11.5px">-20</div>
<div class="a " style="left:810px;top:519px;width:82px;height:15px;background:linear-gradient(#ffd0d0 0,#ff8a8a 25%,#ff3030 55%,#f00 80%)"></div>
<div class="t " style="left:812px;top:519.0px;font-size:11.5px">-11</div>
<div class="a " style="left:895px;top:519px;width:82px;height:15px;background:linear-gradient(#ffd0d0 0,#ff8a8a 25%,#ff3030 55%,#f00 80%)"></div>
<div class="t " style="left:897px;top:519.0px;font-size:11.5px">-11</div>
<div class="a " style="left:980px;top:519px;width:52px;height:15px;background:linear-gradient(#ffd0d0 0,#ff8a8a 25%,#ff3030 55%,#f00 80%)"></div>
<div class="t " style="left:982px;top:519.0px;font-size:11.5px">-6</div>
<div class="a " style="left:555px;top:535px;width:422px;height:15px;background:linear-gradient(#ffffff 0,#fdfde0 40%,#fbfbb8 100%);overflow:hidden"><div class="t" style="left:2px;top:-1px;font-size:11.5px;letter-spacing:-0.3px">M 5/0/0 Dance Sound &amp; Light (Items)</div></div>
<div class="a " style="left:555px;top:551px;width:422px;height:15px;background:linear-gradient(#ffffff 0,#fdfde0 40%,#fbfbb8 100%);overflow:hidden"><div class="t" style="left:2px;top:-1px;font-size:11.5px;letter-spacing:-0.3px">M 5/0/0 Zero Sound &amp; Light (Items)</div></div>
<div class="a " style="left:555px;top:567px;width:477px;height:15px;background:linear-gradient(#ffffff 0,#fdfde0 40%,#fbfbb8 100%);overflow:hidden"><div class="t" style="left:2px;top:-1px;font-size:11.5px;letter-spacing:-0.3px">M 20/0/0 Opening (hall 1)</div></div>
<div class="a " style="left:555px;top:583px;width:477px;height:15px;background:linear-gradient(#ffffff 0,#fdfde0 40%,#fbfbb8 100%);overflow:hidden"><div class="t" style="left:2px;top:-1px;font-size:11.5px;letter-spacing:-0.3px">M 5/0/0 Wenz Sound &amp; Light (Items)</div></div>
<div class="a " style="left:640px;top:599px;width:166px;height:15px;background:linear-gradient(#ffffff 0,#e4f6e0 40%,#c6ecc0 100%);overflow:hidden"><div class="t" style="left:2px;top:-1px;font-size:11.5px;letter-spacing:-0.3px">M 10/0/0 Technology Center S</div></div>
<div class="a " style="left:640px;top:615px;width:166px;height:15px;background:linear-gradient(#ffffff 0,#eaf1fb 40%,#d6e4f8 100%);overflow:hidden"><div class="t" style="left:2px;top:-1px;font-size:11.5px;letter-spacing:-0.3px">M 1/0/0 Sub-hire 123 You're Hi</div></div>
<div class="a " style="left:980px;top:535px;width:52px;height:15px;background:linear-gradient(#ffffff 0,#fdfde0 40%,#fbfbb8 100%);overflow:hidden"><div class="t" style="left:2px;top:-1px;font-size:11.5px;letter-spacing:-0.3px">M 5/0/0 D</div></div>
<div class="a " style="left:806px;top:599px;width:88px;height:31px;background:#f4f4f4"></div>
<svg class="a" style="left:1025px;top:503.5px" width="7" height="10" viewBox="0 0 7 10"><path d="M1,1 L6,5 L1,9 Z" fill="#eef4ff" stroke="#1c4fc0" stroke-width="1"/></svg>
<svg class="a" style="left:1025px;top:520px" width="7" height="10" viewBox="0 0 7 10"><path d="M1,1 L6,5 L1,9 Z" fill="#eef4ff" stroke="#1c4fc0" stroke-width="1"/></svg>
<svg class="a" style="left:1025px;top:536.5px" width="7" height="10" viewBox="0 0 7 10"><path d="M1,1 L6,5 L1,9 Z" fill="#eef4ff" stroke="#1c4fc0" stroke-width="1"/></svg>
<svg class="a" style="left:1025px;top:567.5px" width="7" height="10" viewBox="0 0 7 10"><path d="M1,1 L6,5 L1,9 Z" fill="#eef4ff" stroke="#1c4fc0" stroke-width="1"/></svg>
<svg class="a" style="left:1025px;top:583.5px" width="7" height="10" viewBox="0 0 7 10"><path d="M1,1 L6,5 L1,9 Z" fill="#eef4ff" stroke="#1c4fc0" stroke-width="1"/></svg>
<div class="a " style="left:1032px;top:488px;width:16px;height:143px;background:#f0f0f0"></div>
<div class="a " style="left:1033px;top:505px;width:14px;height:29px;background:#cdcdcd"></div>
<svg class="a" style="left:1035.5px;top:492.0px" width="9" height="9" viewBox="0 0 9 9"><polyline points="1,6 4.5,2.5 8,6" fill="none" stroke="#505050" stroke-width="1.9"/></svg>
<svg class="a" style="left:1035.5px;top:618.0px" width="9" height="9" viewBox="0 0 9 9"><polyline points="1,3 4.5,6.5 8,3" fill="none" stroke="#505050" stroke-width="1.9"/></svg>
<div class="a " style="left:368px;top:631px;width:664px;height:15px;background:#f0f0f0"></div>
<div class="a " style="left:387px;top:632px;width:337px;height:13px;background:#cdcdcd"></div>
<svg class="a" style="left:372.0px;top:634.0px" width="9" height="9" viewBox="0 0 9 9"><polyline points="6,1 2.5,4.5 6,8" fill="none" stroke="#505050" stroke-width="1.9"/></svg>
<svg class="a" style="left:1019.0px;top:634.0px" width="9" height="9" viewBox="0 0 9 9"><polyline points="3,1 6.5,4.5 3,8" fill="none" stroke="#505050" stroke-width="1.9"/></svg>
<div class="a " style="left:1032px;top:631px;width:16px;height:15px;background:#fff"></div>
<div class="t nv" style="left:1057px;top:34.5px;font-weight:bold;font-size:11.5px;letter-spacing:0">Jobs</div>
<div class="a " style="left:1055px;top:51px;width:268px;height:247px;background:#fff;border:1px solid #82878f"></div>
<div class="a " style="left:1059px;top:56.0px;width:13px;height:13px;border:1px solid #333;background:#fff"></div>
<div class="t nv" style="left:1080px;top:55.0px;">All</div>
<div class="a " style="left:1057px;top:73.0px;width:264px;height:19.5px;background:#c1d4f1"></div>
<div class="a " style="left:1059px;top:76.0px;width:13px;height:13px;border:1px solid #333;background:#fff"><svg width="11" height="11" viewBox="0 0 11 11" style="display:block"><polyline points="1.5,5.5 4.2,8.2 9.5,2.2" fill="none" stroke="#4a4a4a" stroke-width="1.25"/></svg></div>
<div class="a " style="left:1078px;top:76.5px;width:6px;height:11px;background:#ffffa4;border:1px solid #e0e088"></div>
<div class="t nv" style="left:1090px;top:75.0px;">17-0010.02 Opening</div>
<div class="a " style="left:1059px;top:96.0px;width:13px;height:13px;border:1px solid #333;background:#fff"></div>
<div class="a " style="left:1078px;top:96.5px;width:6px;height:11px;background:#ffffa4;border:1px solid #e0e088"></div>
<div class="t nv" style="left:1090px;top:95.0px;">17-0010.04 Live-Broadcast</div>
<div class="a " style="left:1059px;top:116.0px;width:13px;height:13px;border:1px solid #333;background:#fff"></div>
<div class="a " style="left:1078px;top:116.5px;width:6px;height:11px;background:#b4e6b0;border:1px solid #9cd096"></div>
<div class="t nv" style="left:1090px;top:115.0px;">17-0010.01 Daily Session</div>
<div class="a " style="left:1059px;top:136.0px;width:13px;height:13px;border:1px solid #333;background:#fff"></div>
<div class="a " style="left:1078px;top:136.5px;width:6px;height:11px;background:#b4e6b0;border:1px solid #9cd096"></div>
<div class="t nv" style="left:1090px;top:135.0px;">17-0010.03 VIP-Room</div>
<div class="a " style="left:1059px;top:156.0px;width:13px;height:13px;border:1px solid #333;background:#fff"></div>
<div class="a " style="left:1078px;top:156.5px;width:6px;height:11px;background:#d9e6fa;border:1px solid #b9cde8"></div>
<div class="t nv" style="left:1090px;top:155.0px;">17-0010.06 Sub-hire 123 You're Hired Inc.</div>
<div class="a " style="left:1059px;top:176.0px;width:13px;height:13px;border:1px solid #333;background:#fff"></div>
<div class="a " style="left:1078px;top:176.5px;width:6px;height:11px;background:#d9e6fa;border:1px solid #b9cde8"></div>
<div class="t nv" style="left:1090px;top:175.0px;">17-0010.07 Sub-hire york Lighting Rental</div>
<div class="t nv" style="left:1057px;top:307.5px;font-weight:bold;font-size:11.5px;letter-spacing:0">Groups</div>
<div class="a " style="left:1055px;top:324px;width:268px;height:300px;background:#fff;border:1px solid #82878f"></div>
<div class="a " style="left:1059px;top:329.0px;width:13px;height:13px;border:1px solid #333;background:#fff"><svg width="11" height="11" viewBox="0 0 11 11" style="display:block"><polyline points="1.5,5.5 4.2,8.2 9.5,2.2" fill="none" stroke="#4a4a4a" stroke-width="1.25"/></svg></div>
<div class="t nv" style="left:1080px;top:328.0px;white-space:pre">All</div>
<div class="a " style="left:1066px;top:349.5px;width:5px;height:11px;background:#ffffa4;border:1px solid #d9d96a"></div>
<div class="t nv" style="left:1076px;top:348.0px;">17-0010.02 Opening</div>
<div class="a " style="left:1185px;top:355.5px;width:133px;height:1px;background:#b4b19c"></div>
<div class="a " style="left:1057px;top:366.0px;width:264px;height:19.5px;background:#c1d4f1"></div>
<div class="a " style="left:1059px;top:369.0px;width:13px;height:13px;border:1px solid #333;background:#fff"><svg width="11" height="11" viewBox="0 0 11 11" style="display:block"><polyline points="1.5,5.5 4.2,8.2 9.5,2.2" fill="none" stroke="#4a4a4a" stroke-width="1.25"/></svg></div>
<div class="t nv" style="left:1080px;top:368.0px;white-space:pre">hall 1</div>
<div class="a " style="left:1059px;top:389.0px;width:13px;height:13px;border:1px solid #333;background:#fff"><svg width="11" height="11" viewBox="0 0 11 11" style="display:block"><polyline points="1.5,5.5 4.2,8.2 9.5,2.2" fill="none" stroke="#4a4a4a" stroke-width="1.25"/></svg></div>
<div class="t nv" style="left:1080px;top:388.0px;white-space:pre">hall 2</div>
<div class="a " style="left:1059px;top:409.0px;width:13px;height:13px;border:1px solid #333;background:#fff"><svg width="11" height="11" viewBox="0 0 11 11" style="display:block"><polyline points="1.5,5.5 4.2,8.2 9.5,2.2" fill="none" stroke="#4a4a4a" stroke-width="1.25"/></svg></div>
<div class="t nv" style="left:1080px;top:408.0px;white-space:pre">Round stage  8x6</div>
<div class="a " style="left:1244px;top:629px;width:78px;height:21px;background:#e1e1e1;border:1px solid #adadad;text-align:center;line-height:19px">Edit</div>
<div class="a " style="left:462px;top:128px;width:350px;height:203px;background:#fff;border:1px solid #7a7a7a"></div>
<div class="a " style="left:466px;top:132.5px;width:13px;height:13px;border:1px solid #333;background:#fff"><svg width="11" height="11" viewBox="0 0 11 11" style="display:block"><polyline points="1.5,5.5 4.2,8.2 9.5,2.2" fill="none" stroke="#4a4a4a" stroke-width="1.25"/></svg></div>
<div class="t nv" style="left:487px;top:132.5px;">Item</div>
<div class="a " style="left:466px;top:152.5px;width:13px;height:13px;border:1px solid #333;background:#fff"></div>
<div class="t nv" style="left:487px;top:152.5px;">Associated Items</div>
<div class="a " style="left:466px;top:172.5px;width:13px;height:13px;border:1px solid #333;background:#fff"></div>
<div class="t nv" style="left:487px;top:172.5px;">Alternatives</div>
<div class="a " style="left:464px;top:190px;width:345px;height:20px;background:#c1d4f1;border:1px dotted #333"></div>
<div class="a " style="left:466px;top:192.5px;width:13px;height:13px;border:1px solid #333;background:#fff"><svg width="11" height="11" viewBox="0 0 11 11" style="display:block"><polyline points="1.5,5.5 4.2,8.2 9.5,2.2" fill="none" stroke="#4a4a4a" stroke-width="1.25"/></svg></div>
<div class="t nv" style="left:487px;top:192.5px;">Partial deliveries</div>
<div class="a " style="left:466px;top:212.5px;width:13px;height:13px;border:1px solid #333;background:#fff"></div>
<div class="t nv" style="left:487px;top:212.5px;">Sub-Hire Assignment</div>
<div class="a " style="left:466px;top:232.5px;width:13px;height:13px;border:1px solid #333;background:#fff"></div>
<div class="t nv" style="left:487px;top:232.5px;">Purchase Orders</div>
<div class="a " style="left:466px;top:252.5px;width:13px;height:13px;border:1px solid #333;background:#fff"></div>
<div class="t nv" style="left:487px;top:252.5px;">Devices</div>
<div class="a " style="left:466px;top:272.5px;width:13px;height:13px;border:1px solid #333;background:#fff"></div>
<div class="t nv" style="left:487px;top:272.5px;">Transport Containers</div>
<div class="a " style="left:466px;top:292.5px;width:13px;height:13px;border:1px solid #333;background:#fff"></div>
<div class="t nv" style="left:487px;top:292.5px;">Assignments</div>
<div class="a " style="left:466px;top:312.5px;width:13px;height:13px;border:1px solid #333;background:#fff"></div>
<div class="t nv" style="left:487px;top:312.5px;">Summarized</div>
<div class="a " style="left:653px;top:391px;width:203px;height:112px;background:#fff;border:1px solid #c6c6c6;box-shadow:2px 2px 3px rgba(0,0,0,.18)"></div>
<div class="t mn" style="left:687px;top:395.8px;">Edit Item</div>
<div class="t mn" style="left:687px;top:417.8px;">Edit Entries</div>
<div class="t mn" style="left:687px;top:439.8px;">Availability</div>
<div class="t mn" style="left:687px;top:461.8px;">Sub-hire Assignment</div>
<div class="a " style="left:655px;top:480px;width:199px;height:22px;background:#cfdcf0"></div>
<svg class="a" style="left:843px;top:487.3px" width="6" height="8" viewBox="0 0 6 8"><path d="M0.5,0.5 L5,4 L0.5,7.5 Z" fill="#444"/></svg>
<div class="t mn" style="left:687px;top:483.8px;color:#555">Transfer to Partial Delivery</div>
<div class="a " style="left:856px;top:481px;width:246px;height:24px;background:#cfdcf0;border:1px solid #c6c6c6"></div>
<div class="t mn" style="left:889px;top:485.5px;color:#555;letter-spacing:-0.25px">14/09/2017 14:00 Secondl delivery</div>
<svg class="a" style="left:1090px;top:488.5px" width="6" height="8" viewBox="0 0 6 8"><path d="M0.5,0.5 L5,4 L0.5,7.5 Z" fill="#444"/></svg>
<div class="a " style="left:1102px;top:483px;width:198px;height:46px;background:#fff;border:1px solid #c6c6c6"></div>
<div class="t mn" style="left:1136px;top:487.5px;letter-spacing:0.3px">Complete quantity</div>
<div class="a " style="left:1104px;top:506px;width:194px;height:22px;background:#cfdcf0"></div>
<div class="t mn" style="left:1136px;top:509.79999999999995px;color:#555;letter-spacing:0.3px">Quantity</div>
<div class="a " style="left:1190px;top:506px;width:108px;height:21px;background:#fff;border:1px solid #8fb0e0"></div>
<div class="t " style="left:1196px;top:509.5px;font-size:11.5px">10</div>
<div class="a circ" style="left:353.0px;top:100.0px">1</div>
<div class="a circ" style="left:440.8px;top:177.0px">2</div>
<div class="a circ" style="left:396.0px;top:226.0px">3</div>
<div class="a circ" style="left:532.0px;top:342.0px">4</div>
<div class="a circ" style="left:351.5px;top:370.5px">5</div>
<div class="a circ" style="left:642.0px;top:471.0px">6</div>
<div class="a circ" style="left:856.0px;top:471.0px">7</div>
<div class="a circ" style="left:1106.0px;top:495.0px">8</div>
</div>
</body></html>
